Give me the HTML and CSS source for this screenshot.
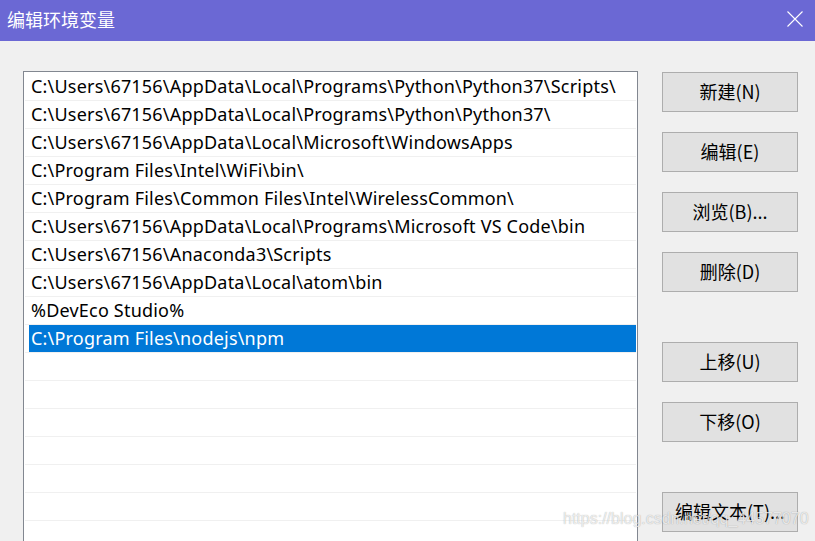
FILE: index.html
```html
<!DOCTYPE html>
<html lang="zh-CN">
<head>
<meta charset="UTF-8">
<title>编辑环境变量</title>
<link rel="stylesheet" href="styles.css">
</head>
<body>
<div class="titlebar">
  <span class="title">编辑环境变量</span>
  <svg class="close" width="16" height="16" viewBox="0 0 16 16">
    <path d="M0.5 0.5L15.5 15.5M15.5 0.5L0.5 15.5" stroke="#fff" stroke-width="1.1" fill="none"/>
  </svg>
</div>
<div class="main">
  <div class="list">
    <div class="row"><div class="item">C:\Users\67156\AppData\Local\Programs\Python\Python37\Scripts\</div></div>
    <div class="row"><div class="item">C:\Users\67156\AppData\Local\Programs\Python\Python37\</div></div>
    <div class="row"><div class="item">C:\Users\67156\AppData\Local\Microsoft\WindowsApps</div></div>
    <div class="row"><div class="item">C:\Program Files\Intel\WiFi\bin\</div></div>
    <div class="row"><div class="item">C:\Program Files\Common Files\Intel\WirelessCommon\</div></div>
    <div class="row"><div class="item">C:\Users\67156\AppData\Local\Programs\Microsoft VS Code\bin</div></div>
    <div class="row"><div class="item">C:\Users\67156\Anaconda3\Scripts</div></div>
    <div class="row"><div class="item">C:\Users\67156\AppData\Local\atom\bin</div></div>
    <div class="row"><div class="item">%DevEco Studio%</div></div>
    <div class="row"><div class="item selected">C:\Program Files\nodejs\npm</div></div>
    <div class="row"><div class="item"></div></div>
    <div class="row"><div class="item"></div></div>
    <div class="row"><div class="item"></div></div>
    <div class="row"><div class="item"></div></div>
    <div class="row"><div class="item"></div></div>
    <div class="row"><div class="item"></div></div>
  </div>
  <div class="buttons">
    <button class="btn">新建(N)</button>
    <button class="btn">编辑(E)</button>
    <button class="btn">浏览(B)...</button>
    <button class="btn">删除(D)</button>
    <button class="btn group">上移(U)</button>
    <button class="btn">下移(O)</button>
    <button class="btn group">编辑文本(T)...</button>
  </div>
</div>
<div class="watermark">https://blog.csdn.net/qq_44577070</div>
</body>
</html>
```

FILE: styles.css
```css
body {
  margin: 0;
  height: 541px;
  overflow: hidden;
  background-color: #f0f0f0;
  font-family: "Noto Sans", "Noto Sans CJK SC", sans-serif;
  position: relative;
}
.titlebar {
  height: 41px;
  background-color: #6b68d4;
  display: flex;
  align-items: center;
  justify-content: space-between;
  padding: 0 12px 0 7px;
}
.title {
  color: #fff;
  font-size: 18px;
  font-family: "Noto Sans CJK SC", sans-serif;
  margin-top: -3px;
}
.close {
  margin-top: -4px;
}
.main {
  display: flex;
  padding: 30px 0 0 23px;
}
.list {
  width: 612px;
  height: 480px;
  border: 1px solid #828790;
  border-bottom: none;
  background-color: #fff;
  padding: 1px 0 0 1px;
}
.row {
  height: 27px;
  border-bottom: 1px solid #f0f0f0;
  margin-right: 1px;
}
.item {
  height: 27px;
  margin-left: 4px;
  padding-left: 2px;
  font-size: 18px;
  letter-spacing: 0.2px;
  line-height: 27px;
  color: #000;
  white-space: nowrap;
}
.item.selected {
  background-color: #0078d7;
  color: #fff;
}
.buttons {
  display: flex;
  flex-direction: column;
  gap: 20px;
  margin-left: 24px;
  padding-top: 1px;
}
.btn {
  width: 136px;
  height: 40px;
  background-color: #e1e1e1;
  border: 1px solid #adadad;
  font-family: "Noto Sans CJK SC", sans-serif;
  font-size: 18px;
  line-height: 36px;
  color: #000;
  padding: 0 0 2px;
}
.btn.group {
  margin-top: 30px;
}
.watermark {
  position: absolute;
  left: 563px;
  top: 510px;
  font-family: "Liberation Sans", sans-serif;
  font-size: 16px;
  color: rgba(255, 255, 255, 0.75);
  text-shadow: 0 0 1px rgba(0, 0, 0, 0.35);
}
```
